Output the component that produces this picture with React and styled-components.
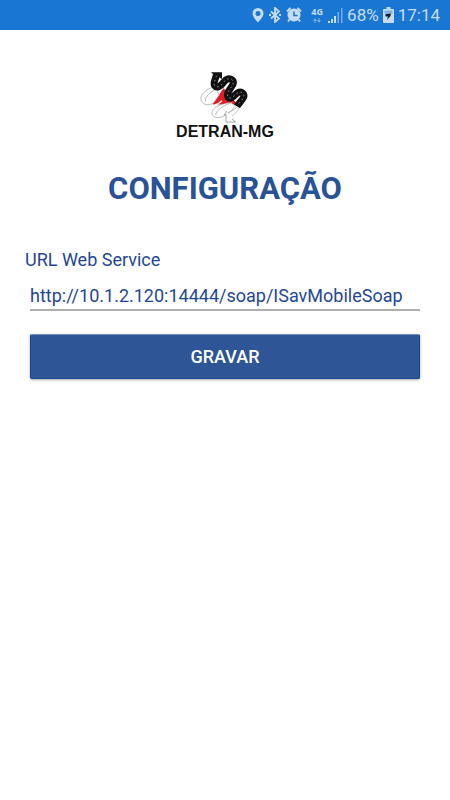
import React, { useState } from 'react';
import styled, { createGlobalStyle } from 'styled-components';

const GlobalStyle = createGlobalStyle`
  * {
    box-sizing: border-box;
  }
  body {
    margin: 0;
    background: #fff;
    font-family: Roboto, sans-serif;
  }
`
const StatusBar = styled.header`
  height: 30px;
  padding: 0 10px;
  display: flex;
  align-items: center;
  justify-content: flex-end;
  gap: 4px;
  background: #1976d2;
  color: #c5dcf4;
  font-size: 17px;
  line-height: 30px;
`
const Icon = styled.svg`
  flex: none;
  display: block;
`
const Network = styled.span`
  width: 14px;
  margin-left: 4px;
  display: flex;
  flex-direction: column;
  align-items: center;
  gap: 2px;
  font-family: "Open Sans", sans-serif;
  font-size: 9px;
  font-weight: 700;
  line-height: 8px;
`
const Main = styled.main`
  display: flex;
  flex-direction: column;
  padding: 42px 30px;
`
const Logo = styled.div`
  display: flex;
  flex-direction: column;
  align-items: center;
`
const LogoText = styled.span`
  font-family: "Liberation Sans", Arial, sans-serif;
  font-size: 16px;
  font-weight: 700;
  line-height: 18px;
  color: #111;
`
const Title = styled.h1`
  margin: 28px 0 40px;
  font-size: 31px;
  font-weight: 700;
  line-height: 40px;
  text-align: center;
  color: #2a5297;
`
const Form = styled.form`
  display: flex;
  flex-direction: column;
`
const Label = styled.label`
  margin-left: -5px;
  font-size: 18px;
  line-height: 22px;
  color: #1f4793;
`
const Input = styled.input`
  width: 100%;
  height: 40px;
  margin-bottom: 23px;
  padding: 14px 0 4px;
  border: none;
  border-bottom: 2px solid #b0b0b0;
  border-radius: 0;
  outline: none;
  background: transparent;
  font-family: inherit;
  font-size: 18px;
  color: #1f4793;
`
const Button = styled.button`
  height: 45px;
  border: 1px solid #164a8e;
  border-top-color: #7590bb;
  border-radius: 2px;
  background: #2e5596;
  box-shadow: 0 1px 3px rgba(0, 0, 0, 0.35);
  font-family: inherit;
  font-size: 18px;
  font-weight: 500;
  color: #fff;
`

const PinIcon = () => (
  <Icon width="12" height="16" viewBox="0 0 12 16" aria-hidden="true">
    <path fill="#c5dcf4" fillRule="evenodd" d="M6 1A5.5 5.5 0 0 0 .5 6.5C.5 10 6 15.5 6 15.5s5.5-5.5 5.5-9A5.5 5.5 0 0 0 6 1zm0 3a2.500 2.500 0 1 1 0 5 2.500 2.500 0 0 1 0-5z" />
  </Icon>
)

const BluetoothIcon = () => (
  <Icon width="14" height="16" viewBox="0 0 14 16" fill="none" stroke="#c5dcf4" aria-hidden="true">
    <path strokeWidth="1.8" d="M3 4.5l8 7L7 15V1l4 3.500-8 7" />
    <path strokeWidth="2" d="M1 8h2M11 8h2" />
  </Icon>
)

const AlarmIcon = () => (
  <Icon width="16" height="16" viewBox="0 0 16 16" fill="none" aria-hidden="true">
    <circle cx="8" cy="8" r="6.5" fill="#c5dcf4" />
    <path stroke="#c5dcf4" strokeWidth="2" d="M1 4.500L4.500 1M11.500 1L15 4.500M3.500 12.500l-1.500 2M12.500 12.500l1.500 2" />
    <path stroke="#1976d2" strokeWidth="1.5" d="M8 4.500v4h3.500" />
  </Icon>
)

const ArrowsIcon = () => (
  <Icon width="8" height="5" viewBox="0 0 8 5" fill="#75ade4" aria-hidden="true">
    <path d="M1.500 5V3H0l2-3 2 3H2.500v2zM5.500 0v2H4l2 3 2-3H6.500V0z" />
  </Icon>
)

const SignalIcon = () => (
  <Icon width="15" height="15" viewBox="0 0 15 15" aria-hidden="true">
    <path fill="#c5dcf4" d="M0 13h2v2H0zM3 11h2v4H3zM6 8h2v7H6z" />
    <path fill="#75ade4" d="M9.500 4H11v11H9.500zM13 0h1.500v15H13z" />
  </Icon>
)

const BatteryIcon = () => (
  <Icon width="11" height="16" viewBox="0 0 11 16" aria-hidden="true">
    <path fill="#c5dcf4" d="M3.500 0h4v2H10a1 1 0 0 1 1 1v12a1 1 0 0 1-1 1H1a1 1 0 0 1-1-1V3a1 1 0 0 1 1-1h2.500z" />
    <path fill="#82b1e1" d="M1.500 3.500h8v3h-8z" />
    <path fill="#16202b" d="M2.500 7L8 6.500 7.500 9 4 13l1-3.500H2.500z" />
  </Icon>
)

const RoadLogo = () => (
  <Icon width="52" height="51" viewBox="102 35 156 153" fill="none" aria-hidden="true">
    <path fill="#e31b23" d="M176 84l40 48h-73z" />
    {/* outlined lower half of the road */}
    <g stroke="#999" strokeWidth="2" fill="#fff">
      <path d="M140 82c-18 6-35 22-32 36 4 16 24 20 38 9l16-22-6-18c-4-6-10-7-16-5z" />
      <path d="M122 124c-4-11 9-28 34-38" />
      <path d="M172 132c-17 4-33 15-31 28 3 16 26 15 43 2l31-20-16-14c-8-2-18 1-27 4z" />
      <path d="M152 164c3-14 22-30 52-38" />
    </g>
    <path fill="#e31b23" d="M172 88l-12 26-17 18h26l22-9 25 9-28-36z" />
    <path stroke="#fff" strokeWidth="4" d="M149 134c8-2 16-7 22-13" />
    <path stroke="#111" strokeWidth="21" strokeLinejoin="round" d="M154 42c0 12-10 24-6 32 7 11 19 4 27-7 8-12 20-16 28-7 8 11-8 22-14 36-5 14 3 22 14 14 12-10 20-21 31-11 10 11-9 24-18 39" />
    <path fill="#111" d="M138 36h33v20l-10-6-16 6 1-13z" />
    <path stroke="#ccc" strokeWidth="2" strokeDasharray="5 8" d="M154 46c0 10-10 20-6 28 7 11 19 4 27-7 8-12 20-16 28-7 8 11-8 22-14 36-5 14 3 22 14 14 12-10 20-21 31-11 10 11-9 24-16 35" />
    <path stroke="#aaa" strokeWidth="2" d="M206 140c-2 10-10 15-18 17M221 144c-3 10-12 18-20 22" />
    <path fill="#fff" stroke="#777" strokeWidth="2" d="M186 152l-8 11h5v22h29l-11-9" />
    <path stroke="#ddd" strokeWidth="1" strokeDasharray="3 3" d="M107 181h70" />
  </Icon>
)

export default () => {
  const [url, setUrl] = useState('http://10.1.2.120:14444/soap/ISavMobileSoap');
  return (
    <>
      <GlobalStyle />
      <StatusBar>
        <PinIcon />
        <BluetoothIcon />
        <AlarmIcon />
        <Network>
          4G
          <ArrowsIcon />
        </Network>
        <SignalIcon />
        <span>68%</span>
        <BatteryIcon />
        <span>17:14</span>
      </StatusBar>
      <Main>
        <Logo>
          <RoadLogo />
          <LogoText>DETRAN-MG</LogoText>
        </Logo>
        <Title>CONFIGURAÇÃO</Title>
        <Form onSubmit={e => e.preventDefault()}>
          <Label htmlFor="url">URL Web Service</Label>
          <Input
            id="url"
            type="text"
            spellCheck={false}
            value={url}
            onChange={e => setUrl(e.target.value)}
          />
          <Button type="submit">GRAVAR</Button>
        </Form>
      </Main>
    </>
  )
}
